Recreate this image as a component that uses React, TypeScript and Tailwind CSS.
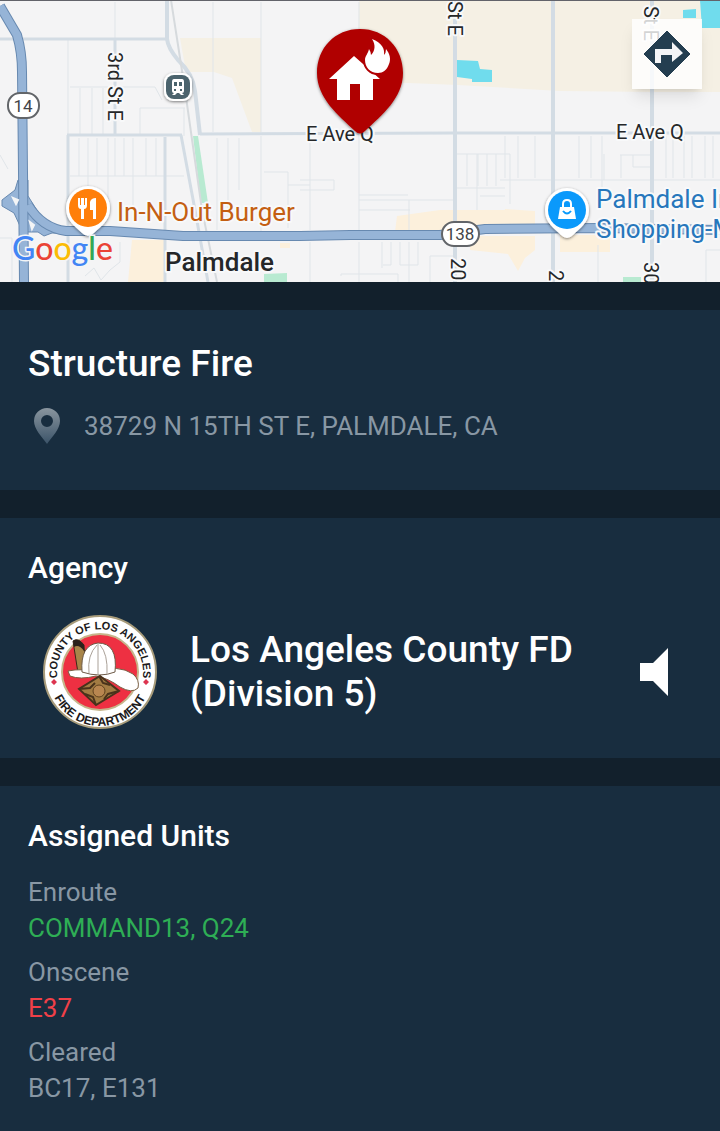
import type { ReactNode } from "react";

const units = [
  { status: "Enroute", names: "COMMAND13, Q24", color: "text-[#2eae55]" },
  { status: "Onscene", names: "E37", color: "text-[#f04048]" },
  { status: "Cleared", names: "BC17, E131", color: "text-[#8897a4]" },
];

const googleLetters = [
  { char: "G", color: "#4285f4" },
  { char: "o", color: "#ea4335" },
  { char: "o", color: "#fbbc05" },
  { char: "g", color: "#4285f4" },
  { char: "l", color: "#34a853" },
  { char: "e", color: "#ea4335" },
];

function StreetMap() {
  return (
    <svg
      viewBox="0 1 720 281"
      preserveAspectRatio="xMidYMid slice"
      className="block h-[281px] w-full"
      role="img"
      aria-label="Map of Palmdale"
    >
      <defs>
        <filter id="pinShadow" x="-30%" y="-30%" width="160%" height="160%">
          <feDropShadow dx="0" dy="1" stdDeviation="1.5" floodOpacity="0.5" />
        </filter>
      </defs>
      <rect width="720" height="282" fill="#f4f4f5" />

      {/* land use */}
      <g fill="#f5f0e4">
        <path d="M359 0H720V92H655L560 91L458 85L358 81Z" />
        <path d="M180 38H261V132H252L232 78L214 72H186Z" />
      </g>
      <g fill="#fcf0dc">
        <path d="M132 240H164V282H128Z" />
        <path d="M397 216L440 210H505V232H395Z" />
        <path d="M505 209L535 211V230H500Z" />
        <path d="M470 236H535V250L525 258L518 271L508 254L470 250Z" />
        <path d="M560 235H610V252H560Z" />
        <path d="M280 243h10v5h-10Z" />
      </g>
      <g fill="#70dced">
        <path d="M457 60L478 61L480 69L492 70V82H472V79L457 77Z" />
        <path d="M683 10L696 9V18H683Z" />
        <path d="M700 0H720V28H702Z" />
      </g>
      <g fill="#b8ead1">
        <path d="M193 136H198L208 203H201Z" />
        <path d="M264 274L287 273V282H264Z" />
        <path d="M623 277H641V282H623Z" />
      </g>

      {/* small streets */}
      <g fill="none" stroke="#e0e5e9" strokeWidth="1">
        <path d="M115 2V39M213 2V132M68 39V136M261 2V132M359 2V132" />
        <path d="M70 87H155L162 100M80 88V134M92 88V134M103 88V134M140 135V108H185M184 108V136" />
        <path d="M79 138V176M88 138V210M97 138V176M108 138V210M115 138V176M124 138V176M133 138V210M146 138V176M156 138V176M70 176H184" />
        <path d="M217 138V230M228 138V208M261 136V232M239 138V190M264 172H288V228M288 185H310M310 134V230M359 134V232M300 180H334V190H300" />
        <path d="M359 195H408M359 200H455M359 210H410M409 200V232M457 154H510V204M467 154V186M478 154V186M477 154V210M487 154V186M496 154V186M457 188H505M480 196H505" />
        <path d="M500 180H720M505 136V178M518 136V178M535 136V178M579 136V178M591 136V178M602 136V208M620 155H650M604 154V180M621 155V178M633 155V167H650M666 136V178M673 136V178M684 136V178M692 136V178M705 136V178M713 136V178" />
        <path d="M310 242V282M359 242V282M382 242V268M391 242V265H383M400 242V265H418V242M409 242V282M430 282V256H455M341 276V274H398V282M598 245V282M706 282V250H720M0 155L8 169M0 238H12V282M85 276L94 268L101 280L110 270L120 262V242" />
      </g>

      {/* arterial roads */}
      <g fill="none" stroke="#d3dce4" strokeWidth="4" strokeLinejoin="round">
        <path d="M0 39H167M115 39V134M67 135H182M200 134L455 133H720" strokeWidth="3" />
        <path d="M167 0V39Q168 48 178 60Q193 74 195 91L200 135" />
        <path d="M68 135V282M165 137V282M181 135L195 210L208 282" strokeWidth="3" />
        <path d="M455 0V282M553 0V282M652 0V282" />
      </g>
      <path d="M171 0L185 90L202 210L217 282" fill="none" stroke="#d6dadd" strokeWidth="2" />

      {/* freeways */}
      <path
        d="M18 180L15 190L2 200V206L14 213L20 226V232H38L44 236L52 233L80 234L66 230Q48 226 38 212L28 196V180Z"
        fill="#96b4d7"
        stroke="#6789b0"
      />
      <g fill="none" strokeLinejoin="round">
        <path
          d="M0 6L17 35Q22 52 22 72L23 172L24 282M28 205Q42 228 66 231L110 231L183 236H300L350 235L440 235L485 229L600 228L720 230"
          stroke="#6789b0"
          strokeWidth="10"
        />
        <path
          d="M0 6L17 35Q22 52 22 72L23 172L24 282M28 205Q42 228 66 231L110 231L183 236H300L350 235L440 235L485 229L600 228L720 230"
          stroke="#96b4d7"
          strokeWidth="8"
        />
      </g>
      <path d="M13 198L18 200L16 204ZM30 222L34 225L32 229Z" fill="#f4f5f6" stroke="#f4f5f6" strokeWidth="2" />

      {/* highway shields */}
      <g fill="#fff" stroke="#626569" strokeWidth="2">
        <rect x="8" y="93" width="31" height="25" rx="12" />
        <rect x="442" y="222" width="37" height="24" rx="12" />
      </g>
      <g fill="#424447" fontSize="17" textAnchor="middle">
        <text x="23" y="112">14</text>
        <text x="460" y="240">138</text>
      </g>

      {/* street names */}
      <g fill="#252729" stroke="#f8f9fa" strokeWidth="4" paintOrder="stroke" strokeLinejoin="round">
        <g fontSize="20">
          <text x="306" y="141">E Ave Q</text>
          <text x="616" y="139">E Ave Q</text>
          <text transform="translate(108 52) rotate(90)">3rd St E</text>
          <text transform="translate(448 1) rotate(90)">St E</text>
          <text transform="translate(644 6) rotate(90)">St E</text>
          <text transform="translate(451 258) rotate(90)">20</text>
          <text transform="translate(549 270) rotate(90)">2</text>
          <text transform="translate(644 262) rotate(90)">30</text>
        </g>
        <text x="165" y="271" fontSize="26" fontWeight="500">Palmdale</text>
        <g fontSize="26">
          <text x="117" y="221" fill="#c45f12">In-N-Out Burger</text>
          <text x="596" y="208" fill="#2777bc">Palmdale In</text>
          <text x="596" y="238" fill="#2777bc">Shopping-M</text>
        </g>
      </g>

      {/* train station */}
      <g filter="url(#pinShadow)">
        <rect x="164" y="73" width="28" height="28" rx="9" fill="#fff" />
        <rect x="166" y="75" width="24" height="24" rx="8" fill="#4b646d" />
      </g>
      <path d="M174 79H182Q184 79 184 82V91Q184 93 182 93L184 95H181L179 93H177L175 95H172L174 93Q172 93 172 91V82Q172 79 174 79Z" fill="#fff" />
      <path d="M174 82H177V86H174ZM179 82H182V86H179ZM174 89H176V91H174ZM180 89H182V91H180Z" fill="#4b646d" />

      {/* places */}
      <g filter="url(#pinShadow)" fill="#fff">
        <path d="M88 186A22 22 0 0 1 110 208C110 221 101 226 94 233Q88 239 82 233C75 226 66 221 66 208A22 22 0 0 1 88 186Z" />
        <path d="M567 188A22 22 0 0 1 589 210C589 223 580 228 573 235Q567 241 561 235C554 228 545 223 545 210A22 22 0 0 1 567 188Z" />
      </g>
      <circle cx="88" cy="208" r="19" fill="#ff7f0a" />
      <circle cx="567" cy="210" r="19" fill="#0a99fb" />
      <path d="M78 198V205Q78 209 81 209V219H84V209Q87 209 87 205V198H85V205H84V198H81V205H80V198ZM90 202Q91 198 96 198V219H93V210H90Z" fill="#fff" />
      <path d="M560 207H574L576 219H558Z" fill="#fff" />
      <path d="M563 208V204Q563 200 567 200Q571 200 571 204V208" fill="none" stroke="#fff" strokeWidth="2" />
      <path d="M563 211Q567 216 571 211" fill="none" stroke="#0a99fb" strokeWidth="2" />

      <text x="12" y="260" fontSize="32" fontFamily="Lato, sans-serif" fontWeight="500" stroke="#f4f5f6" strokeWidth="3" paintOrder="stroke">
        {googleLetters.map((letter, i) => (
          <tspan key={i} fill={letter.color}>
            {letter.char}
          </tspan>
        ))}
      </text>

      {/* incident pin */}
      <path
        d="M360 29C385 29 403 48 403 73C403 98 382 115 365 131Q360 136 355 131C338 115 317 98 317 73C317 48 335 29 360 29Z"
        fill="#b00003"
        filter="url(#pinShadow)"
      />
      <path d="M354 56L380 79H373V100H360V84H350V100H337V79H329Z" fill="#fff" />
      <path
        d="M372 39C382 43 385 49 384 55Q386 53 386 49C390 54 391 59 389 64C387 70 383 73 378 73C370 73 365 67 365 60C365 56 368 54 369 49Q371 52 371 55C375 51 376 45 372 39Z"
        fill="#fff"
        stroke="#b00003"
        strokeWidth="4"
        paintOrder="stroke"
      />
    </svg>
  );
}

function DirectionsIcon() {
  return (
    <svg viewBox="0 0 48 48" className="size-12" aria-hidden="true">
      <path d="M24 1L47 24L24 47L1 24Z" fill="#243e50" stroke="#243e50" strokeLinejoin="round" />
      <path d="M12 33V19H29V12L40 23L29 32V25H18V33Z" fill="#f4f5f7" />
    </svg>
  );
}

function AddressPin() {
  return (
    <svg viewBox="0 0 26 36" className="h-9 w-[26px] shrink-0" aria-hidden="true">
      <defs>
        <linearGradient id="addressPin" x1="0" y1="0" x2="0" y2="1">
          <stop offset="0" stopColor="#89959e" />
          <stop offset="1" stopColor="#3b5368" />
        </linearGradient>
      </defs>
      <path
        d="M13 0A13 13 0 0 1 26 13C26 21 18 29 13 36C8 29 0 21 0 13A13 13 0 0 1 13 0ZM13 7A6 6 0 1 0 13 19A6 6 0 1 0 13 7Z"
        fill="url(#addressPin)"
        fillRule="evenodd"
      />
    </svg>
  );
}

function AgencySeal() {
  return (
    <svg viewBox="0 0 116 116" className="size-[116px] shrink-0" role="img" aria-label="County of Los Angeles Fire Department seal">
      <defs>
        <path id="sealTop" d="M18 74A43 43 0 1 1 98 74" />
        <path id="sealBottom" d="M7 61A51 51 0 0 0 109 61" />
      </defs>
      <circle cx="58" cy="58" r="56" fill="#fff" stroke="#a79b7a" strokeWidth="2" />
      <circle cx="58" cy="58" r="38" fill="#ee3042" stroke="#c6b58b" strokeWidth="2" />
      <g fontFamily="Liberation Sans, sans-serif" fontWeight="700" fill="#1c1a1b" textAnchor="middle">
        <text fontSize="11">
          <textPath href="#sealTop" startOffset="50%">COUNTY OF LOS ANGELES</textPath>
        </text>
        <text fontSize="12">
          <textPath href="#sealBottom" startOffset="50%">FIRE DEPARTMENT</textPath>
        </text>
      </g>
      <path d="M12 65L15 68L12 71L9 68ZM104 65L107 68L104 71L101 68Z" fill="#dd3550" />
      {/* helmet */}
      <path d="M31 27Q36 23 42 31L44 57L36 59Z" fill="#a88549" stroke="#3c2a18" />
      <path d="M31 27Q36 23 42 31L42 37Q37 30 32 33Z" fill="#2b211b" />
      <path d="M26 57Q40 54 55 58Q76 50 91 60Q98 66 96 74Q90 80 78 73Q66 64 54 62Q38 66 28 62Z" fill="#fff" stroke="#7a5f44" />
      <path d="M40 58Q38 31 56 29Q76 29 73 58Q58 64 40 58Z" fill="#fff" stroke="#6e5b48" />
      <path d="M47 59Q45 41 55 31M56 61V30M65 60Q66 40 58 31" fill="none" stroke="#aaa198" />
      <path d="M58 62L77 77L54 91L37 75Z" fill="#a37c43" stroke="#49321b" strokeWidth="2" />
      <path d="M57 62L61 69L68 71M77 77L66 80L62 85M54 91L51 83L43 80M37 75L48 74L53 69" fill="none" stroke="#49321b" strokeWidth="2" />
      <circle cx="57" cy="77" r="6" fill="#b88650" stroke="#60421f" />
    </svg>
  );
}

function Section({ children, className }: { children: ReactNode; className: string }) {
  return <section className={`bg-[#182d3f] px-7 pt-8 ${className}`}>{children}</section>;
}

export default function App() {
  return (
    <main className="flex min-h-screen flex-col gap-7 bg-[#12202c] font-['Roboto',sans-serif]">
      <div className="relative overflow-hidden border-t border-[#62636a]">
        <StreetMap />
        <button
          type="button"
          aria-label="Directions"
          className="absolute top-[18px] right-[18px] flex size-[70px] items-center justify-center bg-white/80 shadow-lg"
        >
          <DirectionsIcon />
        </button>
      </div>

      <Section className="pb-11">
        <h1 className="text-[37px] leading-[44px] font-medium text-white">Structure Fire</h1>
        <div className="mt-5 flex h-10 items-center gap-6 pl-1.5">
          <AddressPin />
          <p className="text-[26px] leading-9 text-[#8897a4]">38729 N 15TH ST E, PALMDALE, CA</p>
        </div>
      </Section>

      <Section className="pb-7">
        <h2 className="text-[30px] leading-9 font-medium text-white">Agency</h2>
        <div className="mt-7 flex items-center pr-6 pl-3.5">
          <AgencySeal />
          <p className="ml-8 flex-1 text-[37px] leading-[44px] font-medium text-white">
            Los Angeles County FD (Division 5)
          </p>
          <button type="button" aria-label="Listen to agency audio">
            <svg viewBox="0 0 28 48" className="h-12 w-7" aria-hidden="true">
              <path d="M0 15H13L28 0V48L13 33H0Z" fill="#fff" />
            </svg>
          </button>
        </div>
      </Section>

      <Section className="flex-1 pb-7">
        <h2 className="text-[30px] leading-9 font-medium text-white">Assigned Units</h2>
        <dl className="mt-5 flex flex-col gap-2 text-[26px] leading-9">
          {units.map((unit) => (
            <div key={unit.status}>
              <dt className="text-[#8897a4]">{unit.status}</dt>
              <dd className={unit.color}>{unit.names}</dd>
            </div>
          ))}
        </dl>
      </Section>
    </main>
  );
}
